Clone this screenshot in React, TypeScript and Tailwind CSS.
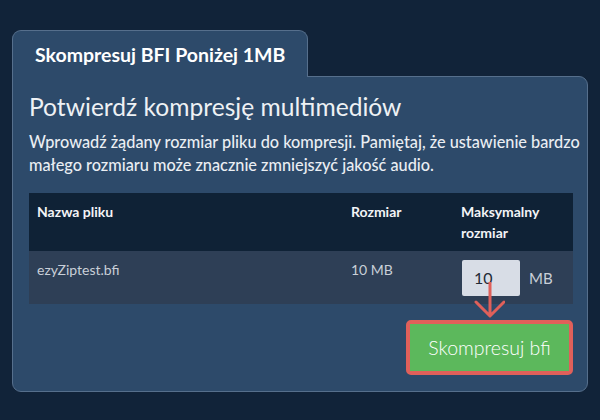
import React from "react";

export default function App() {
  return (
    <div
      className="w-[600px] h-[420px] bg-[#112339] pt-[30px] px-[12px]"
      style={{ fontFamily: "Lato, 'Noto Sans', sans-serif" }}
    >
      <div className="flex">
        <div className="relative z-10 -mb-px w-[296px] h-[47px] bg-[#2d4a6a] border border-b-0 border-[#566f8c] rounded-t-[9px] pl-[22px] pt-[12px]">
          <span className="text-[19.5px] font-bold text-white leading-[24px]">
            Skompresuj BFI Poniżej 1MB
          </span>
        </div>
      </div>
      <div className="relative bg-[#2d4a6a] border border-[#566f8c] rounded-tr-[9px] rounded-b-[9px] px-[16px] pt-[14px] pb-[16px]">
        <h1 className="text-[24.6px] leading-[32px] text-[#eef1f4] font-normal">
          Potwierdź kompresję multimediów
        </h1>
        <p className="mt-[7px] text-[16.3px] leading-[23px] text-[#eaeef3] font-medium">
          <span className="block whitespace-nowrap">
            Wprowadź żądany rozmiar pliku do kompresji. Pamiętaj, że ustawienie bardzo
          </span>
          <span className="block whitespace-nowrap">
            małego rozmiaru może znacznie zmniejszyć jakość audio.
          </span>
        </p>
        <div className="mt-[17px] w-[544px]">
          <div className="flex bg-[#0f2236] h-[58px] text-[14px] leading-[21px] font-bold text-[#f3f4f6]">
            <div className="w-[314px] px-[8px] pt-[8px]">Nazwa pliku</div>
            <div className="w-[110px] px-[8px] pt-[8px]">Rozmiar</div>
            <div className="w-[120px] px-[8px] pt-[8px]">
              Maksymalny
              <br />
              rozmiar
            </div>
          </div>
          <div className="flex bg-[#2e3f56] h-[53px] text-[14px] leading-[21px] text-[#c9cfd8]">
            <div className="w-[314px] px-[8px] pt-[8px]">ezyZiptest.bfi</div>
            <div className="w-[110px] px-[8px] pt-[8px]">10 MB</div>
            <div className="relative w-[120px] pl-[9px] pt-[9px] flex items-start gap-[9px]">
              <div className="w-[58px] h-[36px] bg-[#d8dde6] rounded-[2px] pl-[12px] pt-[7px] text-[16px] leading-[22px] text-[#222b36]">
                10
              </div>
              <span className="h-[36px] flex items-center text-[15px] text-[#c9cfd8]">MB</span>
              <svg
                className="absolute left-[20px] top-[31px]"
                width="32"
                height="38"
                viewBox="0 0 32 38"
              >
                <path
                  d="M17 0 V33 M3 20 L17 34 L31 20"
                  fill="none"
                  stroke="#e0605a"
                  strokeWidth="3"
                  strokeLinecap="round"
                  strokeLinejoin="round"
                />
              </svg>
            </div>
          </div>
          <div className="flex justify-end mt-[16px]">
            <div className="border-[4px] border-[#e0605a] rounded-[5px]">
              <button className="w-[159px] h-[47px] bg-[#5cb85c] text-white text-[19.5px] font-light leading-[24px]">
                Skompresuj bfi
              </button>
            </div>
          </div>
        </div>
      </div>
    </div>
  );
}
